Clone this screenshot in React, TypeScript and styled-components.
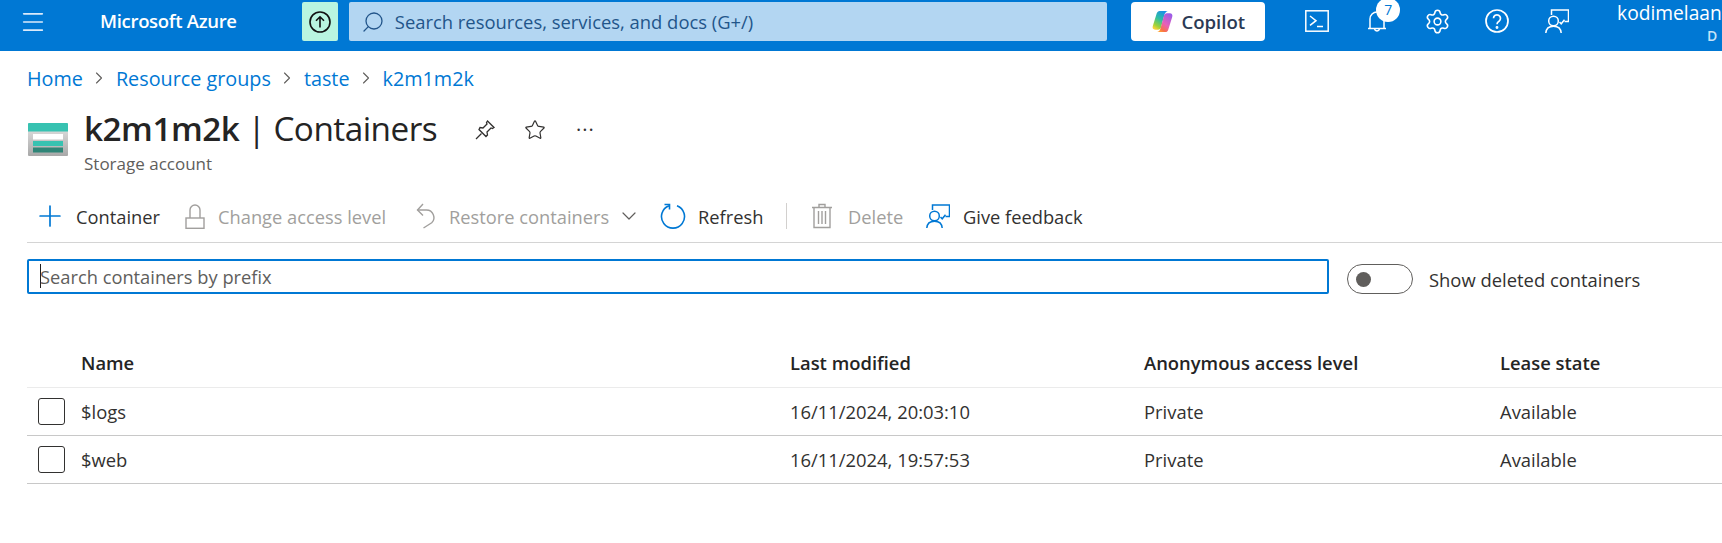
import React from "react";
import styled, { createGlobalStyle } from "styled-components";
import { ChevronDown, ChevronRight, Menu, Plus, Search, Settings, Star } from "lucide-react";

const GlobalStyle = createGlobalStyle`
  html, body {
    margin: 0;
    background: #fff;
    overflow: hidden;
  }
  body {
    font-family: "Open Sans", "Noto Sans", "Liberation Sans", sans-serif;
    color: #323130;
  }
  * { box-sizing: border-box; }
`;

const Page = styled.div`
  width: 1722px;
  height: 543px;
  overflow: hidden;
`;

const TopBar = styled.header`
  display: flex;
  align-items: flex-start;
  height: 51px;
  padding-top: 2px;
  background: #0078d4;
  color: #fff;
  overflow: hidden;
`;

const BurgerButton = styled.div`
  display: flex;
  align-items: center;
  justify-content: center;
  width: 66px;
  height: 39px;
  color: #dbeafa;
`;

const Brand = styled.div`
  width: 236px;
  height: 39px;
  padding-left: 34px;
  font-size: 18.5px;
  font-weight: 600;
  line-height: 38px;
  letter-spacing: -0.3px;
`;

const UploadBadge = styled.div`
  display: flex;
  align-items: center;
  justify-content: center;
  width: 36px;
  height: 39px;
  margin-right: 11px;
  border-radius: 2px;
  background: #b9f5e0;
`;

const GlobalSearch = styled.div`
  display: flex;
  align-items: center;
  gap: 10px;
  width: 759px;
  height: 39px;
  margin-right: 24px;
  padding-left: 12px;
  border-radius: 2px;
  background: #b3d6f2;
  color: #22558a;
  font-size: 18.4px;
  white-space: nowrap;
`;

const CopilotButton = styled.div`
  display: flex;
  align-items: center;
  justify-content: center;
  gap: 7px;
  width: 134px;
  height: 39px;
  margin-right: 22px;
  border-radius: 4px;
  background: #fff;
  color: #2b3a55;
  font-size: 18.6px;
  font-weight: 600;
`;

const IconSlot = styled.div`
  position: relative;
  display: flex;
  align-items: center;
  justify-content: center;
  width: 60px;
  height: 38px;
`;

const CountBadge = styled.span`
  position: absolute;
  top: -4px;
  left: 29px;
  width: 24px;
  height: 24px;
  border-radius: 50%;
  background: #fff;
  color: #0078d4;
  font-size: 14px;
  line-height: 23px;
  text-align: center;
`;

const Account = styled.div`
  width: 105px;
  margin-left: 30px;
  white-space: nowrap;
`;

const AccountName = styled.div`
  font-size: 19.2px;
  line-height: 22px;
`;

const AccountDir = styled.div`
  margin: 3px 0 0 90px;
  font-size: 14px;
  font-weight: 600;
  line-height: 17px;
  color: #c7e3f8;
`;

const Crumbs = styled.nav`
  display: flex;
  align-items: center;
  height: 26px;
  margin: 14px 0 0 27px;
  color: #0078d4;
  font-size: 19.8px;
`;

const CrumbArrow = styled.span`
  display: flex;
  justify-content: center;
  width: 33px;
  color: #605e5c;
`;

const TitleRow = styled.div`
  display: flex;
  align-items: flex-start;
  height: 74px;
  margin: 15px 0 0 27px;
`;

const ResourceIcon = styled.div`
  width: 57px;
  padding: 17px 0 0 1px;
`;

const TitleBlock = styled.div`
  width: 390px;
`;

const Title = styled.h1`
  margin: -1px 0 0;
  font-size: 33.3px;
  font-weight: 400;
  line-height: 46px;
  letter-spacing: -0.5px;
  color: #242424;
  white-space: nowrap;

  b {
    font-weight: 600;
  }
`;

const Subtitle = styled.div`
  margin-top: 2px;
  font-size: 17px;
  line-height: 22px;
  color: #605e5c;
`;

const TitleActions = styled.div`
  display: flex;
  align-items: center;
  gap: 28px;
  height: 48px;
  color: #323130;
`;

const Dots = styled.span`
  margin-left: 2px;
  font-size: 20px;
  letter-spacing: 1px;
  line-height: 20px;
`;

const Toolbar = styled.div`
  display: flex;
  align-items: center;
  height: 50px;
  margin: 13px 0 0 27px;
  padding: 0 0 3px 6px;
  border-bottom: 1px solid #d4d4d4;
`;

const ToolButton = styled.div<{ $width: number; $disabled?: boolean }>`
  display: flex;
  align-items: center;
  width: ${(p) => p.$width}px;
  color: ${(p) => (p.$disabled ? "#a19f9d" : "#323130")};
  font-size: 18.3px;
  white-space: nowrap;
`;

const ToolIcon = styled.span<{ $width: number; $blue?: boolean }>`
  display: flex;
  align-items: center;
  width: ${(p) => p.$width}px;
  color: ${(p) => (p.$blue ? "#0078d4" : "inherit")};
`;

const ToolDivider = styled.span`
  width: 1px;
  height: 26px;
  margin-right: 24px;
  background: #d2d0ce;
`;

const FilterRow = styled.div`
  display: flex;
  align-items: center;
  margin: 15px 0 0 27px;
`;

const FilterInput = styled.div`
  display: flex;
  align-items: center;
  width: 1302px;
  height: 35px;
  margin-right: 18px;
  padding-left: 11px;
  border: 2px solid #0078d4;
  border-radius: 2px;
  color: #605e5c;
  font-size: 18.3px;
`;

const Caret = styled.span`
  width: 1px;
  height: 24px;
  margin-right: -1px;
  background: #201f1e;
`;

const Switch = styled.div`
  display: flex;
  align-items: center;
  width: 66px;
  height: 30px;
  margin: 6px 16px 0 0;
  padding-left: 8px;
  border: 1px solid #605e5c;
  border-radius: 15px;

  &::before {
    content: "";
    width: 15px;
    height: 15px;
    border-radius: 50%;
    background: #605e5c;
  }
`;

const SwitchLabel = styled.span`
  margin-top: 6px;
  font-size: 18.4px;
  white-space: nowrap;
`;

const Table = styled.div`
  margin: 45px 0 0 27px;
`;

const Row = styled.div<{ $head?: boolean }>`
  display: grid;
  grid-template-columns: 54px 709px 354px 356px 1fr;
  align-items: center;
  height: ${(p) => (p.$head ? 49 : 48)}px;
  padding-bottom: ${(p) => (p.$head ? 2 : 0)}px;
  border-bottom: 1px solid ${(p) => (p.$head ? "#ebebeb" : "#c8c8c8")};
  font-size: 18.4px;
  font-weight: ${(p) => (p.$head ? 600 : 400)};
  color: ${(p) => (p.$head ? "#242424" : "#323130")};
`;

const CheckBox = styled.span`
  display: block;
  width: 27px;
  height: 27px;
  margin-left: 11px;
  border: 1px solid #323130;
  border-radius: 3px;
`;

const TerminalIcon = () => (
  <svg width="24" height="24" viewBox="0 0 24 24" fill="none" stroke="#fff" strokeWidth="1.5">
    <rect x="0.8" y="1.8" width="22.400" height="20.400" />
    <path d="M5 7l6 4.700-6 4.700M12 17.500h6" />
  </svg>
);

const BellIcon = () => (
  <svg width="24" height="26" viewBox="0 0 24 26" fill="none" stroke="#fff" strokeWidth="1.5">
    <path d="M5 20V11a7 7 0 0 1 14 0v9" />
    <path d="M3 20.500h18" />
    <path d="M9.500 21a2.600 2.600 0 0 0 5 0" />
  </svg>
);

const HelpIcon = () => (
  <svg width="24" height="24" viewBox="0 0 24 24" fill="none" stroke="#fff" strokeWidth="1.7">
    <circle cx="12" cy="12" r="11" />
    <path d="M8.500 9.300a3.500 3.500 0 1 1 5.500 2.900c-1.300.8-2 1.500-2 3" />
    <circle cx="12" cy="18.500" r=".6" fill="#fff" />
  </svg>
);

const FeedbackIcon = ({ color = "#fff" }: { color?: string }) => (
  <svg width="24" height="24" viewBox="0 0 24 24" fill="none" stroke={color} strokeWidth="1.5">
    <path d="M6.500 6V1h17v11.500H19.500" />
    <circle cx="8.500" cy="12" r="4.800" />
    <path d="M.8 24c.3-4.400 3.500-6.800 7.700-6.800s7.400 2.400 7.700 6.800" />
    <path d="M14.500 13l1.700 1.800 3.300-4" />
  </svg>
);

const UploadIcon = () => (
  <svg width="24" height="24" viewBox="0 0 24 24" fill="none" stroke="#111" strokeWidth="1.6">
    <circle cx="12" cy="12" r="10" />
    <path d="M12 17.500V7M8 10.800l4-4 4 4" />
  </svg>
);

const CopilotIcon = () => (
  <svg width="23" height="23" viewBox="0 0 24 24">
    <defs>
      <linearGradient id="cpLeft" x1="0.7" y1="0" x2="0.2" y2="1">
        <stop offset="0" stopColor="#1b8fe8" />
        <stop offset="0.45" stopColor="#2fc0a0" />
        <stop offset="0.8" stopColor="#9ed23a" />
        <stop offset="1" stopColor="#ffd23a" />
      </linearGradient>
      <linearGradient id="cpRight" x1="0.8" y1="0" x2="0.2" y2="1">
        <stop offset="0" stopColor="#9a5ce8" />
        <stop offset="0.55" stopColor="#e860b8" />
        <stop offset="0.85" stopColor="#f8704a" />
        <stop offset="1" stopColor="#ffa030" />
      </linearGradient>
    </defs>
    <path d="M17.500 1H9C7.500 1 6.500 2 6 3.500L1.800 17c-.6 2 .5 3.500 2.500 3.500H7.500c1.500 0 2.500-1 3-2.500L14 5c.5-2 1.700-3.400 3.500-4z" fill="url(#cpLeft)" />
    <path d="M6.500 23H15c1.500 0 2.500-1 3-2.500L22.200 7c.6-2-.5-3.500-2.500-3.500H16.500c-1.500 0-2.500 1-3 2.500L10 19c-.5 2-1.700 3.400-3.500 4z" fill="url(#cpRight)" />
  </svg>
);

const StorageIcon = () => (
  <svg width="40" height="33" viewBox="0 0 40 33">
    <defs>
      <linearGradient id="storeBody" x1="0" y1="0" x2="0" y2="1">
        <stop offset="0" stopColor="#e6e6e6" />
        <stop offset="1" stopColor="#a8a8a8" />
      </linearGradient>
    </defs>
    <rect x="0" y="0" width="40" height="33" rx="1" fill="url(#storeBody)" />
    <path d="M1 0h38a1 1 0 0 1 1 1v7.500H0V1a1 1 0 0 1 1-1z" fill="#37c2b1" />
    <rect x="5" y="11" width="30" height="5.500" fill="#fff" />
    <rect x="5" y="18" width="30" height="5" fill="#37c2b1" />
    <rect x="5" y="24.500" width="30" height="5" fill="#2f8577" />
  </svg>
);

const PinIcon = () => (
  <svg width="22" height="22" viewBox="0 0 22 22" fill="none" stroke="#323130" strokeWidth="1.3">
    <path d="M13.500 2l6.500 6.500-1.500 1-1.500-.5-4 4 .5 3-1.500 1.500-7-7L6 8.500l3 .5 4-4-.5-1.500z" />
    <path d="M7.500 14.500L2 20" />
  </svg>
);

const LockIcon = () => (
  <svg width="22" height="25" viewBox="0 0 22 25" fill="none" stroke="#a19f9d" strokeWidth="1.4">
    <rect x="2" y="14" width="18" height="10.300" />
    <path d="M6 14V6a5 5 0 0 1 10 0v8" />
  </svg>
);

const RestoreIcon = () => (
  <svg width="24" height="26" viewBox="0 0 24 26" fill="none" stroke="#a19f9d" strokeWidth="1.4">
    <path d="M9 1L3.500 7 9 12.500" />
    <path d="M3.500 7H12.500a7.500 7.500 0 0 1 5.200 12.800L9.500 25" />
  </svg>
);

const RefreshIcon = () => (
  <svg width="26" height="26" viewBox="0 0 26 26" fill="none" stroke="#0078d4" strokeWidth="1.6">
    <path d="M9 2.800a11.500 11.500 0 1 0 8 0" />
    <path d="M4.500 1.500H9.500V6.500" />
  </svg>
);

const TrashIcon = () => (
  <svg width="22" height="26" viewBox="0 0 22 26" fill="none" stroke="#a19f9d" strokeWidth="1.4">
    <path d="M1 4.500h20M8 4.500V1.500h6v3M3 4.500V24.500h16V4.500M7.500 8v13M11 8v13M14.500 8v13" />
  </svg>
);

const rows = [
  { name: "$logs", modified: "16/11/2024, 20:03:10" },
  { name: "$web", modified: "16/11/2024, 19:57:53" },
];

const App = () => {
  return (
    <Page>
      <GlobalStyle />
      <TopBar>
        <BurgerButton>
          <Menu size={28} strokeWidth={1.4} />
        </BurgerButton>
        <Brand>Microsoft Azure</Brand>
        <UploadBadge>
          <UploadIcon />
        </UploadBadge>
        <GlobalSearch>
          <Search size={24} strokeWidth={1.3} style={{ transform: "scaleX(-1)" }} />
          Search resources, services, and docs (G+/)
        </GlobalSearch>
        <CopilotButton>
          <CopilotIcon />
          Copilot
        </CopilotButton>
        <IconSlot>
          <TerminalIcon />
        </IconSlot>
        <IconSlot>
          <BellIcon />
          <CountBadge>7</CountBadge>
        </IconSlot>
        <IconSlot>
          <Settings size={27} strokeWidth={1.4} />
        </IconSlot>
        <IconSlot>
          <HelpIcon />
        </IconSlot>
        <IconSlot>
          <FeedbackIcon />
        </IconSlot>
        <Account>
          <AccountName>kodimelaan</AccountName>
          <AccountDir>D</AccountDir>
        </Account>
      </TopBar>

      <Crumbs>
        Home
        <CrumbArrow><ChevronRight size={20} strokeWidth={1.3} /></CrumbArrow>
        Resource groups
        <CrumbArrow><ChevronRight size={20} strokeWidth={1.3} /></CrumbArrow>
        taste
        <CrumbArrow><ChevronRight size={20} strokeWidth={1.3} /></CrumbArrow>
        k2m1m2k
      </Crumbs>

      <TitleRow>
        <ResourceIcon>
          <StorageIcon />
        </ResourceIcon>
        <TitleBlock>
          <Title><b>k2m1m2k</b> | Containers</Title>
          <Subtitle>Storage account</Subtitle>
        </TitleBlock>
        <TitleActions>
          <PinIcon />
          <Star size={22} strokeWidth={1.3} />
          <Dots>···</Dots>
        </TitleActions>
      </TitleRow>

      <Toolbar>
        <ToolButton $width={151}>
          <ToolIcon $width={43} $blue><Plus size={34} strokeWidth={1.2} /></ToolIcon>
          Container
        </ToolButton>
        <ToolButton $width={230} $disabled>
          <ToolIcon $width={34}><LockIcon /></ToolIcon>
          Change access level
        </ToolButton>
        <ToolButton $width={246} $disabled>
          <ToolIcon $width={35}><RestoreIcon /></ToolIcon>
          Restore containers
          <ChevronDown size={24} strokeWidth={1.2} color="#605e5c" style={{ marginLeft: 8 }} />
        </ToolButton>
        <ToolButton $width={126}>
          <ToolIcon $width={38} $blue><RefreshIcon /></ToolIcon>
          Refresh
        </ToolButton>
        <ToolDivider />
        <ToolButton $width={115} $disabled>
          <ToolIcon $width={37}><TrashIcon /></ToolIcon>
          Delete
        </ToolButton>
        <ToolButton $width={180}>
          <ToolIcon $width={37} $blue><FeedbackIcon color="#0078d4" /></ToolIcon>
          Give feedback
        </ToolButton>
      </Toolbar>

      <FilterRow>
        <FilterInput>
          <Caret />
          Search containers by prefix
        </FilterInput>
        <Switch />
        <SwitchLabel>Show deleted containers</SwitchLabel>
      </FilterRow>

      <Table>
        <Row $head>
          <span />
          <span>Name</span>
          <span>Last modified</span>
          <span>Anonymous access level</span>
          <span>Lease state</span>
        </Row>
        {rows.map((r) => (
          <Row key={r.name}>
            <CheckBox />
            <span>{r.name}</span>
            <span>{r.modified}</span>
            <span>Private</span>
            <span>Available</span>
          </Row>
        ))}
      </Table>
    </Page>
  );
};

export default App;
